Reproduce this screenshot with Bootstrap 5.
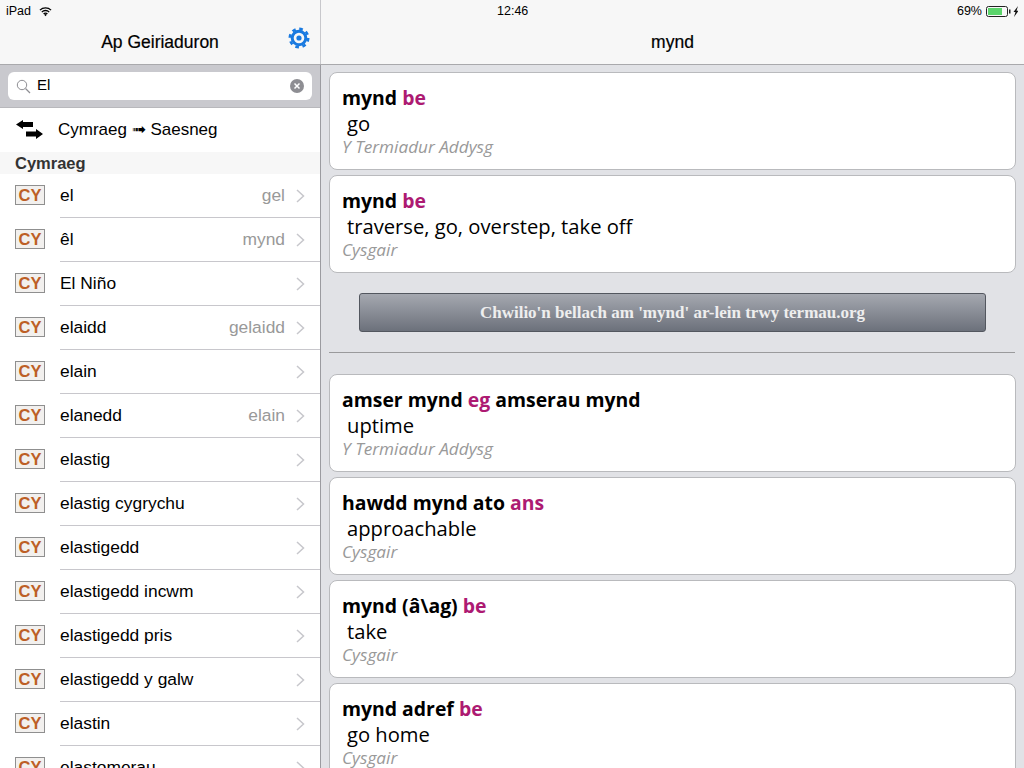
<!DOCTYPE html>
<html lang="cy">

<head>
    <meta charset="UTF-8">
    <meta name="viewport" content="width=device-width, initial-scale=1.0">
    <title>Ap Geiriaduron</title>
    <link rel="stylesheet" href="https://cdn.jsdelivr.net/npm/bootstrap@5.3.2/dist/css/bootstrap.min.css">
    <style>
        html, body {
            height: 768px;
            overflow: hidden;
        }
        body {
            font-family: "Liberation Sans", Arial, sans-serif;
            color: #000;
            background: #fff;
        }
        .top-area {
            background: #f7f7f7;
            height: 65px;
            border-bottom: 1px solid #a9a9ac;
        }
        .status-bar {
            height: 20px;
            font-size: 12.5px;
            line-height: 20px;
            padding: 2px 6px 0;
        }
        .status-time {
            margin-left: 170px;
        }
        .top-left {
            width: 321px;
            border-right: 1px solid #c8c8cc;
        }
        .nav-title {
            height: 44px;
            font-size: 17.5px;
            font-weight: 500;
            line-height: 45px;
            text-align: center;
            -webkit-text-stroke: 0.2px #000;
        }
        .gear-icon {
            position: absolute;
            right: 10px;
            top: 7px;
        }
        .side-col {
            width: 321px;
            flex: none;
            border-right: 1px solid #9b9ba0;
            height: 703px;
            overflow: hidden;
        }
        .search-band {
            background: #c9c9ce;
            height: 43px;
            padding: 7px 8px 0;
            border-bottom: 1px solid #b8b8bc;
        }
        .search-box {
            background: #fff;
            border-radius: 6px;
            height: 28px;
            font-size: 15px;
            line-height: 28px;
            padding: 0 8px;
        }
        .search-text {
            margin: 0 0 2px 6px;
        }
        .swap-row {
            height: 44px;
            font-size: 17px;
            padding-left: 15px;
        }
        .swap-text {
            margin-left: 14px;
        }
        .section-head {
            height: 22px;
            line-height: 23px;
            background: #f7f7f7;
            font-size: 16.5px;
            font-weight: 700;
            color: #333;
            padding-left: 15px;
        }
        .word-row {
            height: 44px;
            padding-left: 15px;
        }
        .cy-tag {
            width: 30px;
            height: 20px;
            flex: none;
            margin-bottom: 2px;
            border: 1px solid #8f8f8f;
            background: #f2f0ee;
            color: #bd5f26;
            font-size: 16.5px;
            font-weight: 700;
            line-height: 19px;
            text-align: center;
        }
        .word-body {
            height: 44px;
            margin-left: 15px;
            padding-right: 15px;
            font-size: 17.4px;
            border-bottom: 1px solid #c8c7cc;
            flex: 1;
            min-width: 0;
        }
        .word-alt {
            color: #999;
            margin-left: auto;
            margin-right: 11px;
        }
        .word-chev {
            flex: none;
        }
        .main-col {
            background: #e1e2e6;
            height: 703px;
            overflow: hidden;
            padding: 7px 8px 0 8px;
            font-family: "Open Sans", "Noto Sans", sans-serif;
        }
        .entry-box {
            background: #fff;
            border: 1px solid #b9babd;
            border-radius: 8px;
            height: 98px;
            margin-bottom: 5px;
            padding: 11px 12px 0;
        }
        .entry-head {
            font-size: 19.4px;
            font-weight: 700;
            line-height: 27px;
        }
        .entry-pos {
            color: #ad1a72;
        }
        .entry-def {
            font-size: 20.2px;
            line-height: 25px;
            padding-left: 5px;
        }
        .entry-src {
            color: #999;
            font-size: 17.2px;
            font-style: italic;
            line-height: 21px;
        }
        .more-btn {
            display: block;
            width: 627px;
            height: 39px;
            margin: 20px 0 0 30px;
            padding: 0;
            border: 1px solid #53575f;
            border-radius: 3px;
            background: linear-gradient(#a5a8b0, #6c717b);
            color: #eee;
            font-family: "Liberation Serif", serif;
            font-size: 17px;
            font-weight: 700;
        }
        .entry-rule {
            margin: 20px 1px 21px 0;
            border: 0;
            border-top: 1px solid #9a9a9c;
            opacity: 1;
        }
    </style>
</head>

<body>
    <div class="top-area d-flex position-relative">
        <div class="top-left">
            <div class="status-bar d-flex align-items-center gap-1">
                <span>iPad</span>
                <svg class="ms-1" width="13" height="11" viewBox="0 0 14 11">
                    <path d="M1 4a8.500 8.500 0 0 1 12 0M3 6.200a5.400 5.400 0 0 1 8 0M5 8.200a2.600 2.600 0 0 1 4 0" fill="none" stroke="#000" stroke-width="1.400"/>
                    <path d="M7 10.600 5.600 9a2 2 0 0 1 2.800 0z"/>
                </svg>
            </div>
            <div class="nav-title position-relative">
                Ap Geiriaduron
                <svg class="gear-icon" width="22" height="22" viewBox="0 0 22 22">
                    <circle cx="11" cy="11" r="6.800" fill="none" stroke="#1a7ae0" stroke-width="3"/>
                    <circle cx="11" cy="11" r="9.200" fill="none" stroke="#1a7ae0" stroke-width="2.600" stroke-dasharray="3.600 3.620"/>
                    <circle cx="11" cy="11" r="2.600" fill="#1a7ae0"/>
                </svg>
            </div>
        </div>
        <div class="flex-grow-1">
            <div class="status-bar d-flex align-items-center">
                <span class="status-time">12:46</span>
                <span class="ms-auto me-1">69%</span>
                <svg width="32" height="11" viewBox="0 0 32 11">
                    <rect x="0.500" y="0.500" width="21" height="10" rx="2" fill="none" stroke="#222"/>
                    <rect x="2" y="2" width="14" height="7" fill="#5bd46b"/>
                    <rect x="23" y="3.500" width="1.500" height="4" fill="#222"/>
                    <path d="M32 0 27.500 6h2L28 11l4.500-6.200h-2z" fill="#111"/>
                </svg>
            </div>
            <div class="nav-title">mynd</div>
        </div>
    </div>

    <div class="d-flex">
        <div class="side-col">
            <div class="search-band">
                <div class="search-box d-flex align-items-center">
                    <svg width="15" height="15" viewBox="0 0 15 15">
                        <circle cx="6" cy="6" r="4.700" fill="none" stroke="#8e8e93"/>
                        <path d="M9.500 9.500 14 14" stroke="#8e8e93" stroke-width="1.200"/>
                    </svg>
                    <span class="search-text">El</span>
                    <svg class="ms-auto" width="14" height="14" viewBox="0 0 14 14">
                        <circle cx="7" cy="7" r="7" fill="#8e8e93"/>
                        <path d="M4.500 4.500l5 5M9.500 4.500l-5 5" stroke="#fff" stroke-width="1.500"/>
                    </svg>
                </div>
            </div>
            <div class="swap-row d-flex align-items-center">
                <svg width="29" height="20" viewBox="0 0 29 20">
                    <path d="M1 4.500 8 0v2h10v5H8v2zM28 14l-7-5v2.500H11v5h10V19z"/>
                </svg>
                <span class="swap-text">Cymraeg ➟ Saesneg</span>
            </div>
            <div class="section-head">Cymraeg</div>
            <div id="wordList"></div>
        </div>
        <div class="main-col flex-grow-1" id="entries"></div>
    </div>

    <script>
        const words = [
            ['el', 'gel'], ['êl', 'mynd'], ['El Niño', ''], ['elaidd', 'gelaidd'],
            ['elain', ''], ['elanedd', 'elain'], ['elastig', ''], ['elastig cygrychu', ''],
            ['elastigedd', ''], ['elastigedd incwm', ''], ['elastigedd pris', ''],
            ['elastigedd y galw', ''], ['elastin', ''], ['elastomerau', '']
        ];
        const chevron = '<svg class="word-chev" width="9" height="14" viewBox="0 0 9 14"><path d="M1 1l6.500 6L1 13" fill="none" stroke="#c7c7cc" stroke-width="1.500"/></svg>';
        document.getElementById('wordList').innerHTML = words.map(w => `
            <div class="word-row d-flex align-items-center">
                <div class="cy-tag">CY</div>
                <div class="word-body d-flex align-items-center">
                    <span>${w[0]}</span>
                    <span class="word-alt">${w[1]}</span>
                    ${chevron}
                </div>
            </div>`).join('');

        function entry(head, pos, tail, def, src) {
            return `<div class="entry-box">
                <div class="entry-head">${head} <span class="entry-pos">${pos}</span>${tail ? ' ' + tail : ''}</div>
                <div class="entry-def">${def}</div>
                <div class="entry-src">${src}</div>
            </div>`;
        }
        document.getElementById('entries').innerHTML =
            entry('mynd', 'be', '', 'go', 'Y Termiadur Addysg') +
            entry('mynd', 'be', '', 'traverse, go, overstep, take off', 'Cysgair') +
            `<button class="more-btn" type="button">Chwilio'n bellach am 'mynd' ar-lein trwy termau.org</button>
             <hr class="entry-rule">` +
            entry('amser mynd', 'eg', 'amserau mynd', 'uptime', 'Y Termiadur Addysg') +
            entry('hawdd mynd ato', 'ans', '', 'approachable', 'Cysgair') +
            entry('mynd (â\\ag)', 'be', '', 'take', 'Cysgair') +
            entry('mynd adref', 'be', '', 'go home', 'Cysgair');
    </script>
    <script src="https://cdn.jsdelivr.net/npm/bootstrap@5.3.2/dist/js/bootstrap.bundle.min.js"></script>
</body>

</html>
